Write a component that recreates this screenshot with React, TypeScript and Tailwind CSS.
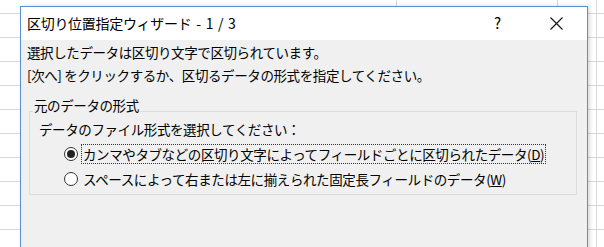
import React from 'react';

const font = { fontFamily: '"Noto Sans CJK JP", "Noto Sans", sans-serif' };

function Radio({ checked }: { checked: boolean }) {
  return (
    <span className="flex h-[14px] w-[14px] shrink-0 items-center justify-center rounded-full border border-[#333] bg-white">
      {checked && <span className="h-[8px] w-[8px] rounded-full bg-[#222]" />}
    </span>
  );
}

export default function App() {
  return (
    <div
      className="h-[247px] w-[604px] overflow-hidden bg-white bg-[image:linear-gradient(#d9d9d9_1px,transparent_1px),linear-gradient(to_right,transparent_396px,#d9d9d9_396px,#d9d9d9_397px,transparent_397px,transparent_557px,#d9d9d9_557px,#d9d9d9_558px,transparent_558px,transparent_596px,#d9d9d9_596px,#d9d9d9_597px,transparent_597px)] bg-[size:100%_24px,100%_100%] bg-[position:0_13px,0_0] pt-[6px] pl-[20px] text-black"
      style={font}
    >
      <div className="h-[260px] w-[568px] border border-[#5b8fd4] bg-[#f0f0f0] shadow-[2px_0_4px_rgba(0,0,0,0.15)]">
        <div className="flex h-[33px] items-center bg-white pl-[6px]">
          <span className="text-[14px] tracking-[-0.3px] [word-spacing:2px]">区切り位置指定ウィザード - 1 / 3</span>
          <span className="ml-auto mr-[49px] text-[15px]">?</span>
          <svg className="mr-[24px] h-[13px] w-[13px]" viewBox="0 0 13 13">
            <path d="M0.5 0.5 L12.5 12.5 M12.5 0.5 L0.5 12.5" stroke="#111" strokeWidth="1.1" />
          </svg>
        </div>
        <div className="pt-[1px] pl-[6px] text-[13.5px] leading-[23px] tracking-[-0.4px]">
          <p>選択したデータは区切り文字で区切られています。</p>
          <p>[次へ] をクリックするか、区切るデータの形式を指定してください。</p>
          <div className="relative mt-[24px] mr-[10px] ml-[2px] h-[84px] border border-[#dcdcdc]">
            <span className="absolute top-[-17px] left-[3px] bg-[#f0f0f0] px-[1px] leading-[20px]">元のデータの形式</span>
            <p className="pt-[6px] pl-[9px]">データのファイル形式を選択してください：</p>
            <div className="flex items-center gap-[3px] pl-[34px] pt-[3px]">
              <Radio checked />
              <span className="border border-dotted border-[#333] px-[1px] leading-[18px]">
                カンマやタブなどの区切り文字によってフィールドごとに区切られたデータ(<span className="underline">D</span>)
              </span>
            </div>
            <div className="flex items-center gap-[3px] pl-[34px] pt-[6px]">
              <Radio checked={false} />
              <span className="px-[2px] leading-[18px]">
                スペースによって右または左に揃えられた固定長フィールドのデータ(<span className="underline">W</span>)
              </span>
            </div>
          </div>
        </div>
      </div>
    </div>
  );
}
